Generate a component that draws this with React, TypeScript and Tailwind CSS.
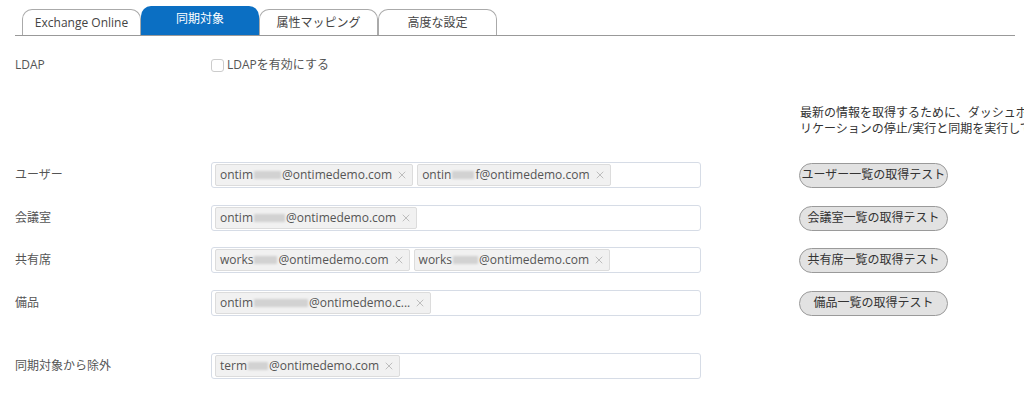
import { X } from "lucide-react";

const font = { fontFamily: '"Open Sans", "Noto Sans CJK JP", sans-serif' };

type Chip = { pre: string; blur: number; post: string };

const rows: { label: string; chips: Chip[]; button?: string; gap: string }[] = [
  {
    label: "ユーザー",
    gap: "mt-[25px]",
    button: "ユーザー一覧の取得テスト",
    chips: [
      { pre: "ontim", blur: 27, post: "@ontimedemo.com" },
      { pre: "ontin", blur: 22, post: "f@ontimedemo.com" },
    ],
  },
  {
    label: "会議室",
    gap: "mt-[17px]",
    button: "会議室一覧の取得テスト",
    chips: [{ pre: "ontim", blur: 31, post: "@ontimedemo.com" }],
  },
  {
    label: "共有席",
    gap: "mt-[16px]",
    button: "共有席一覧の取得テスト",
    chips: [
      { pre: "works", blur: 23, post: "@ontimedemo.com" },
      { pre: "works", blur: 25, post: "@ontimedemo.com" },
    ],
  },
  {
    label: "備品",
    gap: "mt-[17px]",
    button: "備品一覧の取得テスト",
    chips: [{ pre: "ontim", blur: 54, post: "@ontimedemo.c..." }],
  },
  {
    label: "同期対象から除外",
    gap: "mt-[37px]",
    chips: [{ pre: "term", blur: 20, post: "@ontimedemo.com" }],
  },
];

const tabs = ["Exchange Online", "同期対象", "属性マッピング", "高度な設定"];

function Tag({ chip }: { chip: Chip }) {
  return (
    <span className="flex h-[22px] items-center rounded-[2px] border border-[#dcdcdc] bg-[#f1f1f1] pl-[4px] pr-[4px] text-[12px] text-[#555]">
      <span>{chip.pre}</span>
      <span
        className="mx-px inline-block h-[8px] bg-[#d2d2d2] blur-[1px]"
        style={{ width: chip.blur }}
      />
      <span>{chip.post}</span>
      <X className="ml-[4px] h-[12px] w-[12px] text-[#b0b0b0]" strokeWidth={1.6} />
    </span>
  );
}

export default function App() {
  return (
    <div className="h-[398px] w-[1024px] overflow-hidden bg-white text-[12px] text-[#555]" style={font}>
      <div className="ml-[15px] flex h-[36px] w-[1000px] items-end border-b border-[#999] pl-[7px]">
        {tabs.map((t, i) =>
          i === 1 ? (
            <div
              key={t}
              className="flex h-[29px] w-[118px] items-center justify-center rounded-t-[10px] bg-[#0b6fc3] pb-[3px] text-white"
            >
              {t}
            </div>
          ) : (
            <div
              key={t}
              className="flex h-[26px] w-[119px] items-center justify-center rounded-t-[10px] border border-b-0 border-[#aaa] bg-white text-[#444]"
            >
              {t}
            </div>
          )
        )}
      </div>

      <div className="px-[15px]">
        <div className="mt-[22px] flex h-[14px] items-center">
          <div className="w-[196px]">LDAP</div>
          <span className="h-[13px] w-[13px] rounded-[3px] border border-[#ccc] bg-white" />
          <span className="ml-[3px]">LDAPを有効にする</span>
        </div>

        <div className="ml-[785px] mt-[33px] whitespace-nowrap leading-[16px] text-[#333]">
          <div>最新の情報を取得するために、ダッシュボードからアプ</div>
          <div>リケーションの停止/実行と同期を実行してください。</div>
        </div>

        {rows.map((r) => (
          <div key={r.label} className={`${r.gap} flex h-[26px] items-center`}>
            <div className="w-[196px]">{r.label}</div>
            <div className="flex h-[26px] w-[490px] items-center gap-[4px] rounded-[3px] border border-[#d6dce6] bg-white px-[3px]">
              {r.chips.map((c, i) => (
                <Tag key={i} chip={c} />
              ))}
            </div>
            {r.button && (
              <button className="ml-[98px] h-[25px] w-[149px] rounded-full border border-[#9a9a9a] bg-[#e2e2e2] text-[12px] text-[#333]">
                {r.button}
              </button>
            )}
          </div>
        ))}
      </div>
    </div>
  );
}
